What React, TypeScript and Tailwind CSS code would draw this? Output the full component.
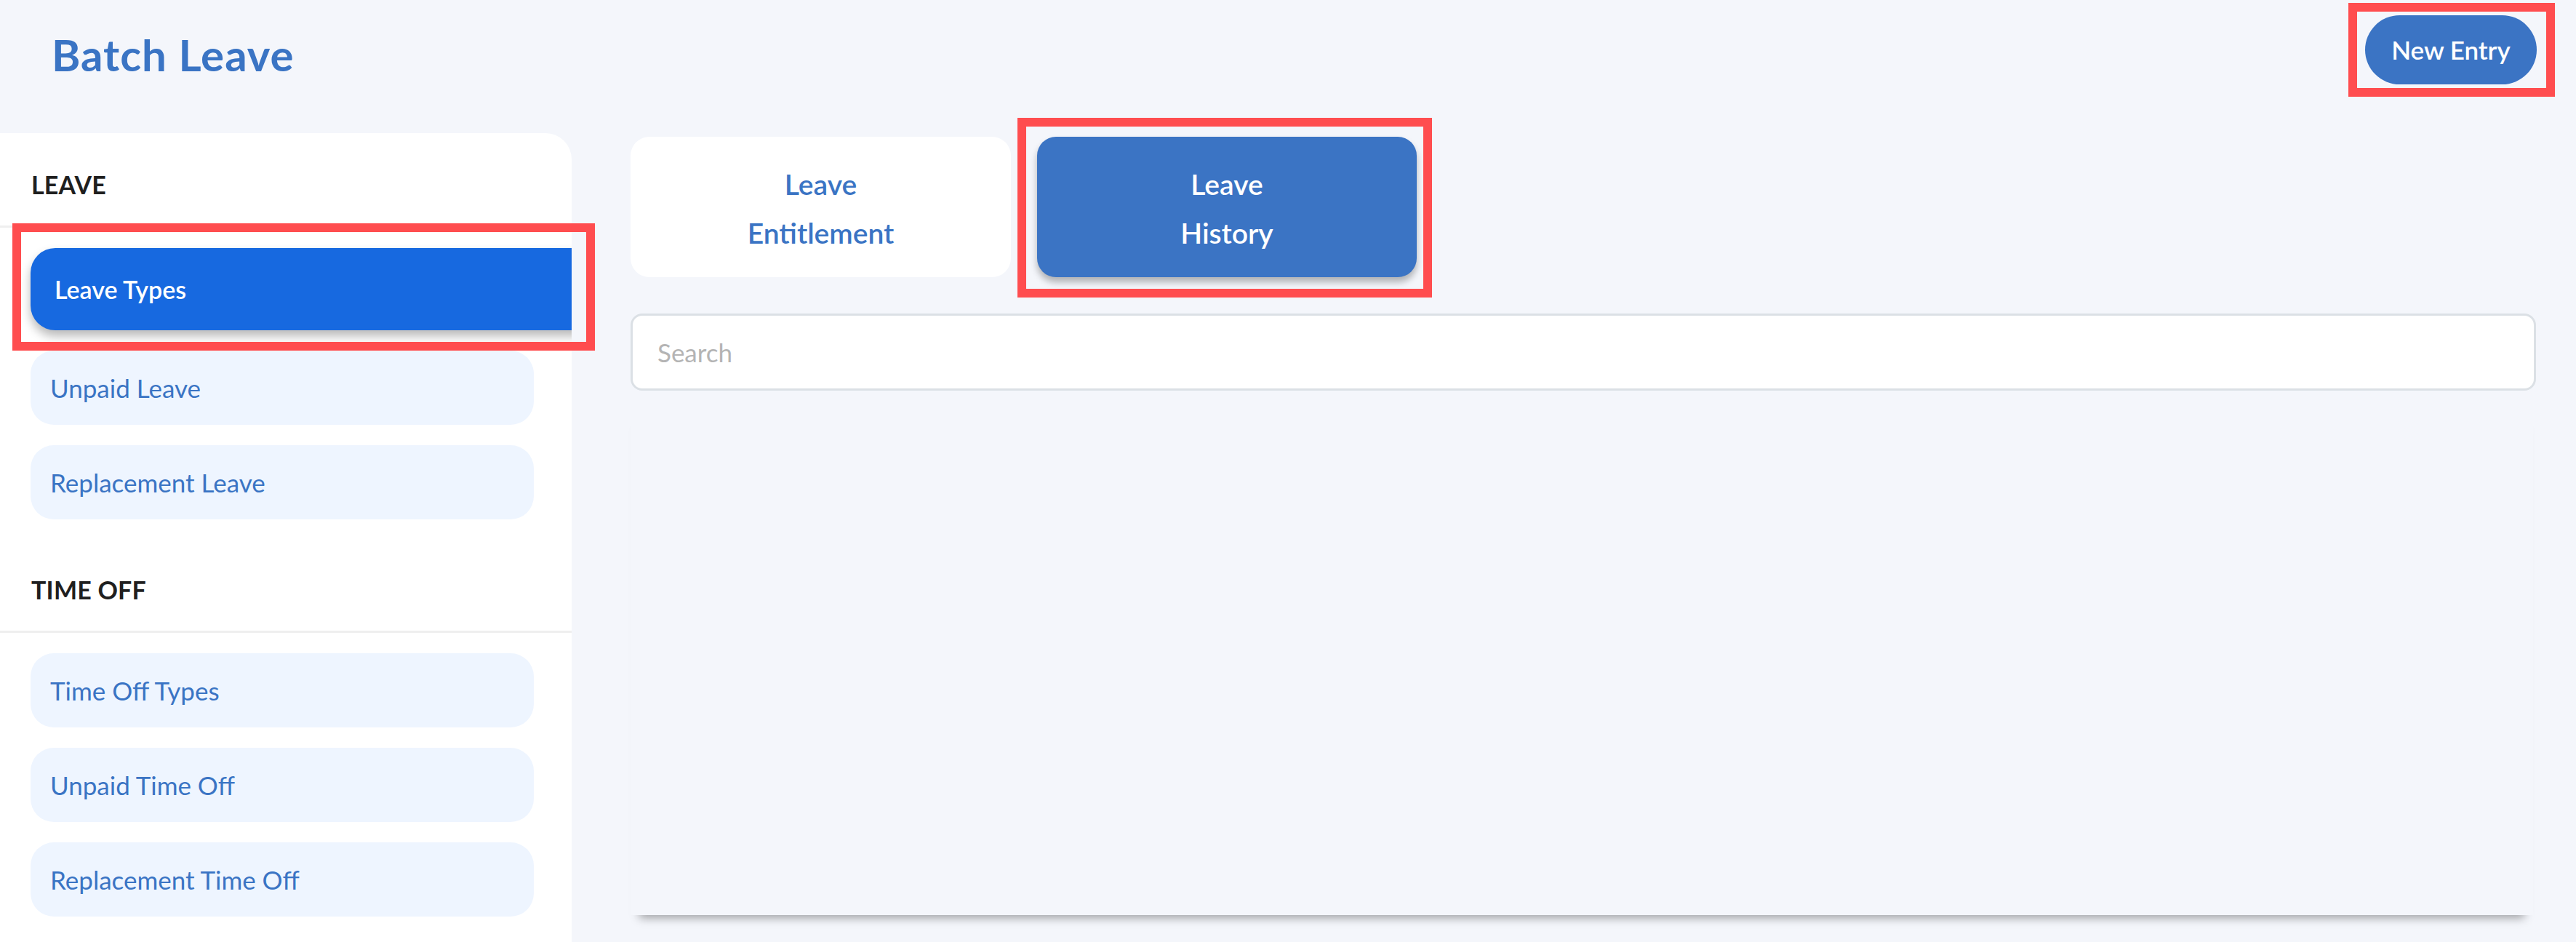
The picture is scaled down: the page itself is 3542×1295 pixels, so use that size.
import React from "react";

const leaveItems = ["Unpaid Leave", "Replacement Leave"];
const timeOffItems = ["Time Off Types", "Unpaid Time Off", "Replacement Time Off"];

function SectionHeader({ title }: { title: string }) {
  return (
    <div className="h-[130px] box-border border-b-[3px] border-[#efefef] pt-[54px] pl-[43px]">
      <div className="text-[34px] leading-none font-bold text-[#1f1f1f] tracking-[0.2px]">{title}</div>
    </div>
  );
}

function Item({ label }: { label: string }) {
  return (
    <div className="ml-[42px] w-[692px] h-[102px] rounded-[32px] bg-[#eef5ff] flex items-center pl-[27px]">
      <span className="text-[35px] leading-none text-[#3a74c4]">{label}</span>
    </div>
  );
}

export default function App() {
  return (
    <div className="relative w-full h-[1295px] overflow-hidden bg-[#f4f6fb] flex flex-col font-['Lato',sans-serif]">
      <header className="h-[183px] shrink-0 flex items-start justify-between pl-[71px] pr-[54px]">
        <h1 className="mt-[45px] text-[60px] leading-none font-bold text-[#3a74c4] tracking-[1px]">Batch Leave</h1>
        <button className="mt-[21px] w-[236px] h-[95px] rounded-full bg-[#3b74c4] text-white text-[35px] font-semibold leading-none">
          New Entry
        </button>
      </header>

      <div className="flex flex-1 min-h-0">
        <aside className="w-[786px] shrink-0 bg-white rounded-tr-[36px] overflow-hidden">
          <SectionHeader title="LEAVE" />
          <div className="pt-[28px] pb-[26px] flex flex-col gap-[28px]">
            <div className="ml-[42px] w-[780px] h-[113px] rounded-[34px] bg-[#1769e0] flex items-center pl-[33px] shadow-[0_8px_14px_rgba(0,0,0,0.28)]">
              <span className="text-[34px] leading-none font-semibold text-white">Leave Types</span>
            </div>
            {leaveItems.map((l) => (
              <Item key={l} label={l} />
            ))}
          </div>
          <SectionHeader title="TIME OFF" />
          <div className="pt-[28px] flex flex-col gap-[28px]">
            {timeOffItems.map((l) => (
              <Item key={l} label={l} />
            ))}
          </div>
        </aside>

        <main className="flex-1 min-w-0 pl-[81px] pr-[55px] pt-[5px] flex flex-col">
          <div className="flex gap-[36px]">
            <div className="w-[523px] h-[193px] rounded-[26px] bg-white flex items-center justify-center pt-[5px]">
              <div className="text-center text-[39px] leading-[67px] font-semibold text-[#3a74c4]">
                Leave
                <br />
                Entitlement
              </div>
            </div>
            <div className="w-[522px] h-[193px] rounded-[26px] bg-[#3b74c4] flex items-center justify-center pt-[5px] shadow-[0_7px_10px_rgba(0,0,0,0.28)]">
              <div className="text-center text-[39px] leading-[67px] font-semibold text-white">
                Leave
                <br />
                History
              </div>
            </div>
          </div>

          <div className="mt-[50px] h-[106px] rounded-[16px] border-[3px] border-[#dbe0e5] bg-white flex items-center pl-[34px]">
            <span className="text-[35px] leading-none text-[#b4b4b4]">Search</span>
          </div>

          <div className="mt-[23px] h-[698px] mr-[4px] bg-[#f4f6fb] shadow-[0_16px_12px_-12px_rgba(0,0,0,0.35)]" />
        </main>
      </div>

      {/* annotation boxes */}
      <div className="absolute left-[3229px] top-[4px] w-[284px] h-[129px] border-[12px] border-[#ff4d4f] pointer-events-none" />
      <div className="absolute left-[17px] top-[307px] w-[801px] h-[175px] border-[12px] border-[#ff4d4f] pointer-events-none" />
      <div className="absolute left-[1399px] top-[162px] w-[570px] h-[247px] border-[12px] border-[#ff4d4f] pointer-events-none" />
    </div>
  );
}
